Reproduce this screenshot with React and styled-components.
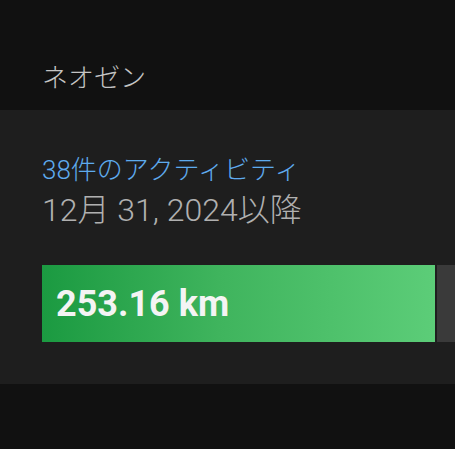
import React from "react";
import styled, { createGlobalStyle } from "styled-components";

const GlobalStyle = createGlobalStyle`
  html, body {
    margin: 0;
    padding: 0;
    background: #111111;
    overflow: hidden;
  }
  body {
    font-family: Roboto, "Noto Sans CJK JP", sans-serif;
  }
`;

const Page = styled.div`
  width: 455px;
  height: 449px;
  background: #111111;
  padding-top: 60px;
  box-sizing: border-box;
`;

const Header = styled.div`
  padding-left: 42px;
  height: 50px;
  font-size: 26px;
  font-weight: 300;
  line-height: 36px;
  color: #c4c4c4;
`;

const Card = styled.div`
  background: #1e1e1e;
  padding: 44px 0 42px 42px;
  display: flex;
  flex-direction: column;
`;

const Count = styled.div`
  font-size: 26px;
  font-weight: 300;
  line-height: 32px;
  color: #5eabee;
`;

const Since = styled.div`
  font-size: 32px;
  font-weight: 300;
  line-height: 40px;
  color: #b0b0b0;
  margin-top: 4px;
`;

const Track = styled.div`
  margin-top: 35px;
  height: 77px;
  display: flex;
  gap: 2px;
`;

const Fill = styled.div`
  flex: none;
  display: flex;
  align-items: center;
  padding-left: 14px;
  box-sizing: border-box;
  background: linear-gradient(90deg, #1b9a41 0%, #3fb45d 45%, #5ccd78 100%);
  color: #f4f4f4;
  font-size: 36px;
  font-weight: 700;
`;

const Rest = styled.div`
  flex: 1;
  background: #3a3a3a;
`;

export default function App() {
  const progress = 393;
  return (
    <Page>
      <GlobalStyle />
      <Header>ネオゼン</Header>
      <Card>
        <Count>38件のアクティビティ</Count>
        <Since>12月 31, 2024以降</Since>
        <Track>
          <Fill style={{ width: progress }}>253.16 km</Fill>
          <Rest />
        </Track>
      </Card>
    </Page>
  );
}
